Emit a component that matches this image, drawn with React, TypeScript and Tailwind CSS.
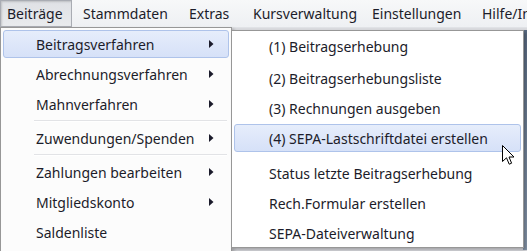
import React from "react";

const Arrow = () => (
  <svg width="5" height="8" viewBox="0 0 5 8" className="block">
    <path d="M0 0 L4.5 4 L0 8 Z" fill="#1b1b2b" />
  </svg>
);

type Item = { label: string; sub?: boolean; active?: boolean; sep?: boolean };

const first: Item[] = [
  { label: "Beitragsverfahren", sub: true, active: true },
  { label: "Abrechnungsverfahren", sub: true },
  { label: "Mahnverfahren", sub: true, sep: true },
  { label: "Zuwendungen/Spenden", sub: true, sep: true },
  { label: "Zahlungen bearbeiten", sub: true },
  { label: "Mitgliedskonto", sub: true },
  { label: "Saldenliste" },
];

const second: Item[] = [
  { label: "(1) Beitragserhebung" },
  { label: "(2) Beitragserhebungsliste" },
  { label: "(3) Rechnungen ausgeben" },
  { label: "(4) SEPA-Lastschriftdatei erstellen", active: true },
  { label: "Status letzte Beitragserhebung" },
  { label: "Rech.Formular erstellen" },
  { label: "SEPA-Dateiverwaltung" },
];

function Row({ item, pl }: { item: Item; pl: string }) {
  return (
    <div className="h-[30px] px-[2px] py-[1px]">
      <div
        className={
          "h-full flex items-center rounded-[3px] border " +
          (item.active
            ? "border-[#aec3ea] bg-gradient-to-b from-[#e6edfb] to-[#d6e1f8]"
            : "border-transparent")
        }
      >
        <span className={pl + " flex-1 whitespace-nowrap"}>{item.label}</span>
        {item.sub && (
          <span className="pr-[14px]">
            <Arrow />
          </span>
        )}
      </div>
    </div>
  );
}

const Sep = () => (
  <div className="h-[4px] flex flex-col justify-center pl-[33px] pr-[4px]">
    <div className="h-px bg-[#e2e3e6]" />
    <div className="h-px bg-white" />
  </div>
);

export default function App() {
  return (
    <div
      className="relative w-[527px] h-[251px] overflow-hidden bg-[#d9dade] text-[#1c1c2a] text-[14px]"
      style={{ fontFamily: '"Noto Sans", "Open Sans", sans-serif' }}
    >
      <div className="h-[28px] flex items-stretch bg-gradient-to-b from-[#f7f8f9] to-[#eef0f3] border-b border-[#e0e2e6] whitespace-nowrap">
        <div className="shrink-0 w-[72px] pl-[6px] flex items-center border border-[#a9acb3] bg-gradient-to-b from-[#dfe1e5] to-[#e9ebee] shadow-[inset_1px_1px_2px_rgba(0,0,0,0.15)]">
          Beiträge
        </div>
        <div className="shrink-0 w-[106px] pl-[11px] flex items-center">Stammdaten</div>
        <div className="shrink-0 w-[64px] pl-[11px] flex items-center">Extras</div>
        <div className="shrink-0 w-[119px] pl-[11px] flex items-center">Kursverwaltung</div>
        <div className="shrink-0 w-[110px] pl-[11px] flex items-center">Einstellungen</div>
        <div className="shrink-0 pl-[11px] flex items-center">Hilfe/Info</div>
      </div>

      <div className="absolute right-0 top-[30px] w-[4px] h-[220px] bg-gradient-to-b from-[#5a6b82] to-[#8797ab]" />

      <div className="absolute left-0 top-[27px] w-[232px] h-[230px] bg-[#fcfcfc] border border-[#979797] pt-px shadow-[2px_2px_3px_rgba(0,0,0,0.25)]">
        {first.map((it) => (
          <React.Fragment key={it.label}>
            <Row item={it} pl="pl-[32px]" />
            {it.sep && <Sep />}
          </React.Fragment>
        ))}
      </div>

      <div className="absolute left-[231px] top-[30px] w-[293px] h-[218px] bg-white border border-[#979797] shadow-[2px_2px_3px_rgba(0,0,0,0.25)]">
        <Row item={second[0]} pl="pl-[34px]" />
        <div className="h-[2px]" />
        <Row item={second[1]} pl="pl-[34px]" />
        <Row item={second[2]} pl="pl-[34px]" />
        <Row item={second[3]} pl="pl-[34px]" />
        <div className="h-[5px]" />
        <Row item={second[4]} pl="pl-[34px]" />
        <Row item={second[5]} pl="pl-[34px]" />
        <Row item={second[6]} pl="pl-[34px]" />
      </div>

      <svg
        className="absolute left-[502px] top-[145px]"
        width="13"
        height="21"
        viewBox="0 0 13 21"
      >
        <path
          d="M0.5 0.5 L0.5 16.5 L4.5 12.8 L7.2 19.2 L9.6 18.2 L7 12 L12 12 Z"
          fill="white"
          stroke="black"
          strokeWidth="1"
          strokeLinejoin="round"
        />
      </svg>
    </div>
  );
}
